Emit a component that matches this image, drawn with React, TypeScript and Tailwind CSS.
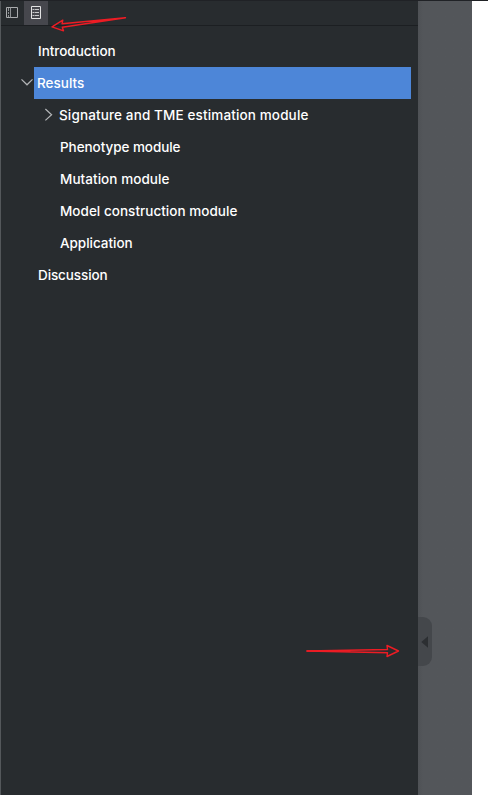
import React from "react";

type Item = { label: string; indent: string; spacing: string; chevron?: "down" | "right"; selected?: boolean };

const items: Item[] = [
  { label: "Introduction", indent: "pl-[37px]", spacing: "tracking-[-0.03px]" },
  { label: "Results", indent: "pl-5", spacing: "tracking-[0px]", chevron: "down", selected: true },
  { label: "Signature and TME estimation module", indent: "pl-[42px]", spacing: "tracking-[0.135px]", chevron: "right" },
  { label: "Phenotype module", indent: "pl-[59px]", spacing: "tracking-[-0.06px]" },
  { label: "Mutation module", indent: "pl-[59px]", spacing: "tracking-[0.06px]" },
  { label: "Model construction module", indent: "pl-[59px]", spacing: "tracking-[0.03px]" },
  { label: "Application", indent: "pl-[59px]", spacing: "tracking-[-0.03px]" },
  { label: "Discussion", indent: "pl-[37px]", spacing: "tracking-[-0.1px]" },
];

function Chevron({ dir }: { dir: "down" | "right" }) {
  return (
    <svg className="h-8 w-[13px] shrink-0" viewBox="0 0 13 32" fill="none" stroke="#b4b6b8" strokeWidth="1.2">
      <path d={dir === "down" ? "M0.5 12.4L6 17.8L11.5 12.4" : "M2.4 10L8.6 15.7L2.4 21.4"} />
    </svg>
  );
}

function Row({ item }: { item: Item }) {
  return (
    <li className={`flex h-8 items-center ${item.indent}`}>
      {item.chevron && <Chevron dir={item.chevron} />}
      <span
        className={`flex h-8 items-center whitespace-nowrap pt-px ${item.spacing} ${
          item.selected ? "w-[377px] bg-[#4d86d8] pl-[3px]" : item.chevron ? "pl-[3px]" : ""
        }`}
      >
        {item.label}
      </span>
    </li>
  );
}

export default function App() {
  return (
    <div className="relative flex h-[795px] w-[488px] flex-col overflow-hidden bg-white font-['Inter','Liberation_Sans',sans-serif] text-[13.5px] font-medium text-white">
      <div className="h-px shrink-0 bg-[#202226]" />
      <div className="flex flex-1">
        <aside className="flex w-[418px] flex-col border-l border-[#54585b] bg-[#282c2f]">
          <div className="flex h-[25px] border-b border-[#1c1f22]">
            <button aria-label="Thumbnails" className="h-6 w-[23px]">
              <svg className="h-6 w-[23px]" viewBox="0 0 23 24" fill="none" stroke="#aaacae">
                <path d="M5.5 6.5H16.5V16.5H5.5Z" />
                <path d="M9.5 6.5V16.5" stroke="#8e9194" />
                <path d="M7.5 7V10M7.5 11V13M7.5 14V16" stroke="#8e9194" />
              </svg>
            </button>
            <button aria-label="Outline" className="h-6 w-6 bg-[#46474d]">
              <svg className="h-6 w-6" viewBox="0 0 24 24" fill="none" stroke="#e2e2e3">
                <path d="M7.5 5.5H16.5V17.5H7.5Z" />
                <path d="M8.5 8.5H10M10.5 8.5H15M8.5 11.5H10M10.5 11.5H15M8.5 14.5H10M10.5 14.5H15" stroke="#c9c9cb" />
              </svg>
            </button>
          </div>
          <ul className="pt-[9px]">
            {items.map((item) => (
              <Row key={item.label} item={item} />
            ))}
          </ul>
        </aside>
        <div className="flex w-[54px] flex-col bg-gradient-to-r from-[#4e5155] to-[#53565a] to-[5px] pt-[616px]">
          <button aria-label="Collapse" className="flex h-[49px] w-3.5 items-center rounded-r-[9px] bg-[#44474b] pl-[3px]">
            <svg className="mt-px h-3 w-[7px]" viewBox="0 0 7 12" fill="#2c2f32">
              <path d="M0.3 6L7 0.3V11.7Z" />
            </svg>
          </button>
        </div>
      </div>
      <svg className="pointer-events-none absolute inset-0 h-[795px] w-[488px]" viewBox="0 0 488 795" fill="none" stroke="#ed1c24" strokeWidth="1.4" strokeLinejoin="round" strokeLinecap="round">
        <path d="M125.5 17.7L62 23.8L62.8 20.2L52 26.8L63.5 30.8L62.3 27.2Z" />
        <path d="M307 651L387.5 649.5L387 645.5L398.5 651L387 656.5L387.5 652.7Z" />
        <path d="M307 651H350" />
      </svg>
    </div>
  );
}
